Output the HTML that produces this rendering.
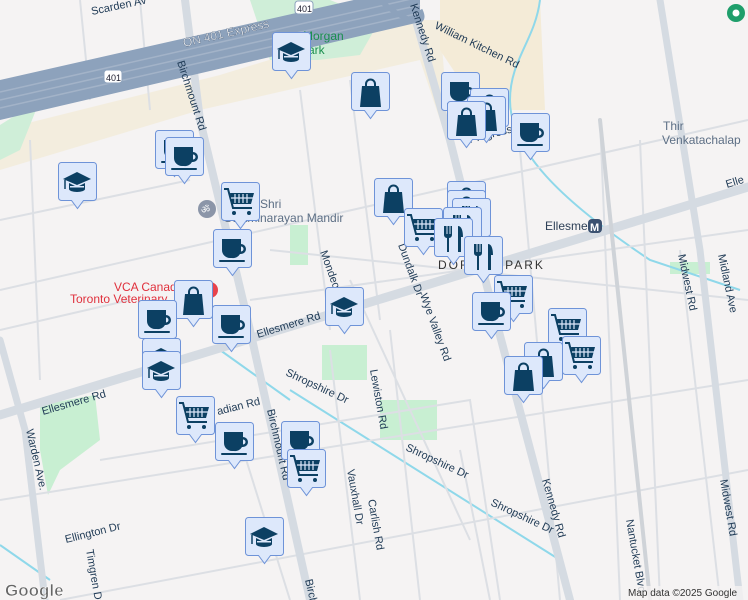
<!DOCTYPE html>
<html><head><meta charset="utf-8"><style>
html,body{margin:0;padding:0;width:748px;height:600px;overflow:hidden;background:#f5f3f3}
svg{display:block}
text{font-family:"Liberation Sans",sans-serif}
</style></head><body>
<svg width="748" height="600" viewBox="0 0 748 600" xmlns="http://www.w3.org/2000/svg">
<defs>
<g id="mk"><path d="M3.5,0.5 h32 a3,3 0 0 1 3,3 v32 a3,3 0 0 1 -3,3 h-10 l-6,8 l-6,-8 h-10 a3,3 0 0 1 -3,-3 v-32 a3,3 0 0 1 3,-3z" fill="#dde8fb" stroke="#6e93d8" stroke-width="1"/></g>
<g id="cup"><use href="#mk"/><path d="M9,10 h19 v5 a5,5 0 0 1 0,10 h-1 a8,8 0 0 1 -8,4 h-2 a8,8 0 0 1 -8,-8z M28,17.5 v5 a2.5,2.5 0 0 0 0,-5z" fill="#0c4063" fill-rule="evenodd"/><rect x="6" y="31" width="26" height="2" rx="1" fill="#0c4063"/></g>
<g id="bag"><use href="#mk"/><path d="M11,14 h17 l2,21 h-21z" fill="#0c4063"/><path d="M15,15 v-3 a4.5,4.5 0 0 1 9,0 v3" fill="none" stroke="#0c4063" stroke-width="2"/></g>
<g id="cart"><use href="#mk"/><path d="M3,7 h4 l5,19 h19" fill="none" stroke="#0c4063" stroke-width="2"/><path d="M9,11 h24 l-3,11 h-19z" fill="#0c4063"/><path d="M14,12 v9 M18,12 v9 M22,12 v9 M26,12 v9 M10,16 h22" stroke="#dde8fb" stroke-width="1.2"/><circle cx="13" cy="31" r="2" fill="#0c4063"/><circle cx="28" cy="31" r="2" fill="#0c4063"/></g>
<g id="cap"><use href="#mk"/><path d="M5,17 l14,-7 l14,7 l-14,6z" fill="#0c4063"/><path d="M11,21 v6 a8,3 0 0 0 16,0 v-6 l-8,4z" fill="#0c4063"/><rect x="12" y="24" width="14" height="1.5" fill="#dde8fb"/><path d="M7,18 v9" stroke="#0c4063" stroke-width="1.5"/></g>
<g id="fork"><use href="#mk"/><path d="M10,8 v9 a3,3 0 0 0 3,3 v14 h2 v-14 a3,3 0 0 0 3,-3 v-9 h-1.5 v8 h-1 v-8 h-2 v8 h-1 v-8z" fill="#0c4063"/><path d="M24,8 c4,0 5,6 5,11 h-2 v15 h-3z" fill="#0c4063"/></g>
</defs>
<!-- land areas -->
<path d="M0,130 L220,75 L400,20 L440,20 L450,150 L420,60 L200,110 L0,170z" fill="#f3ecdc" opacity="0.9"/>
<path d="M440,0 L540,0 L545,110 L480,110 L440,50z" fill="#f4ebd7"/>
<path d="M250,0 L330,0 L380,20 L360,55 L318,60 L270,60z" fill="#cfeed8"/>
<path d="M0,125 L40,100 L20,150 L0,160z" fill="#cfeed8"/>
<path d="M40,405 L95,395 L100,440 L60,470 L48,495 L40,450z" fill="#c8efd2"/>
<path d="M290,225 h18 v40 h-18z M322,345 h45 v35 h-45z M380,400 h57 v40 h-57z M670,262 h40 v12 h-40z" fill="#c8efd2"/>
<!-- water -->
<path d="M540,0 C535,40 510,60 510,100 C510,150 560,200 650,260 L740,290" fill="none" stroke="#8fd8ea" stroke-width="2"/>
<path d="M290,390 L560,560 M0,545 L50,580 M220,350 L290,400" fill="none" stroke="#8fd8ea" stroke-width="2"/>
<!-- minor streets -->
<g stroke="#dcdfe4" stroke-width="2" fill="none">
<path d="M0,290 L748,120 M0,220 L190,180 M250,300 L748,230 M0,500 L748,380 M60,600 L748,470 M270,250 L748,300 M80,0 L90,100 M140,0 L150,110 M30,140 L40,380 M300,90 L330,330 M350,80 L380,320 M600,120 L620,600 M640,140 L660,600 M680,250 L720,600 M520,150 L560,600 M390,330 L420,600 M330,350 L360,600 M460,450 L490,600 M0,330 L130,300 M100,460 L470,400 L500,600 M240,440 L290,600 M350,280 L470,540"/>
</g>
<!-- main roads -->
<g stroke="#d5dbe2" fill="none" stroke-linecap="round">
<path d="M0,415 L748,187" stroke-width="9"/>
<path d="M185,0 L200,120 L250,330 L310,600" stroke-width="8"/>
<path d="M410,0 L450,140 L480,260 L570,600" stroke-width="8"/>
<path d="M660,0 L700,250 L740,600" stroke-width="7"/>
<path d="M0,340 L25,430 L45,600" stroke-width="7"/>
<path d="M600,120 L650,600" stroke-width="4" stroke="#cfd3d8"/>
</g>
<!-- highway -->
<path d="M0,80 L420,-15 L420,22 L0,120z" fill="#8da2bc"/>
<path d="M0,92 L420,-3 M0,100 L420,5 M0,108 L420,13" stroke="#a3b3c8" stroke-width="1.5" fill="none"/>
<path d="M380,0 C400,20 430,30 420,10" stroke="#8da2bc" stroke-width="5" fill="none"/>
<rect x="295" y="1" width="18" height="13" rx="3" fill="#fff" stroke="#8da2bc"/>
<text x="297" y="12" font-size="9" fill="#223">401</text>
<rect x="104" y="70" width="18" height="13" rx="3" fill="#fff" stroke="#8da2bc"/>
<text x="106" y="81" font-size="9" fill="#223">401</text>
<text transform="translate(184,47) rotate(-13)" font-size="12" fill="#fff" stroke="#3f536f" stroke-width="0.3">ON 401 Express</text>
<!-- labels -->
<g font-size="11" fill="#1f3a55">
<text transform="translate(92,15) rotate(-12)">Scarden Av</text>
<text transform="translate(177,62) rotate(72)">Birchmount Rd</text>
<text transform="translate(410,5) rotate(72)">Kennedy Rd</text>
<text transform="translate(434,28) rotate(26)">William Kitchen Rd</text>
<text transform="translate(43,415) rotate(-16)">Ellesmere Rd</text>
<text transform="translate(258,338) rotate(-17)">Ellesmere Rd</text>
<text transform="translate(727,188) rotate(-17)">Elle</text>
<text transform="translate(26,430) rotate(77)">Warden Ave.</text>
<text transform="translate(267,410) rotate(77)">Birchmount Rd</text>
<text transform="translate(305,580) rotate(77)">Birchmo</text>
<text transform="translate(320,252) rotate(70)">Mondeo</text>
<text transform="translate(398,245) rotate(70)">Dundalk Dr</text>
<text transform="translate(420,295) rotate(70)">Wye Valley Rd</text>
<text transform="translate(370,370) rotate(80)">Lewiston Rd</text>
<text transform="translate(285,375) rotate(25)">Shropshire Dr</text>
<text transform="translate(405,450) rotate(25)">Shropshire Dr</text>
<text transform="translate(490,505) rotate(25)">Shropshire Dr</text>
<text transform="translate(542,480) rotate(74)">Kennedy Rd</text>
<text transform="translate(347,470) rotate(80)">Vauxhall Dr</text>
<text transform="translate(368,500) rotate(80)">Carlish Rd</text>
<text transform="translate(66,543) rotate(-14)">Ellington Dr</text>
<text transform="translate(86,550) rotate(80)">Timgren Dr</text>
<text transform="translate(678,255) rotate(78)">Midwest Rd</text>
<text transform="translate(718,255) rotate(78)">Midland Ave</text>
<text transform="translate(720,480) rotate(80)">Midwest Rd</text>
<text transform="translate(626,520) rotate(80)">Nantucket Blvd</text>
<text transform="translate(218,415) rotate(-14)">adian Rd</text>
<text transform="translate(470,143) rotate(-14)">Progress</text>
</g>
<text x="545" y="230" font-size="12" fill="#2e4057">Ellesmere</text>
<rect x="588" y="219" width="14" height="14" rx="4" fill="#3b5170"/><text x="590" y="231" font-size="11" fill="#fff" font-weight="bold">M</text>
<text x="438" y="269" font-size="12" fill="#333" letter-spacing="2">DORSET PARK</text>
<text x="663" y="130" font-size="12" fill="#5d6f85">Thir</text>
<text x="662" y="144" font-size="12" fill="#5d6f85">Venkatachalap</text>
<text x="260" y="208" font-size="12" fill="#5d6f85">Shri</text>
<text x="224" y="222" font-size="12" fill="#5d6f85">Swaminarayan Mandir</text>
<circle cx="207" cy="209" r="9" fill="#8b95a8"/><text x="201" y="213" font-size="10" fill="#fff">ॐ</text>
<text x="303" y="40" font-size="12" fill="#1a8f4e">Morgan</text>
<text x="300" y="54" font-size="12" fill="#1a8f4e">Park</text>
<circle cx="210" cy="290" r="8" fill="#e8424b"/>
<text x="114" y="291" font-size="12" fill="#e0303c">VCA Canada</text>
<text x="70" y="303" font-size="12" fill="#e0303c">Toronto Veterinary</text>
<circle cx="736" cy="13" r="9" fill="#1f9e6b"/><circle cx="736" cy="13" r="3.5" fill="#fff"/>
<text x="5" y="596" font-size="17" font-weight="bold" fill="#666" stroke="#fff" stroke-width="0.6">Google</text>
<rect x="624" y="586" width="124" height="14" fill="#f5f3f3" opacity="0.8"/>
<text x="628" y="596" font-size="10" fill="#333">Map data ©2025 Google</text>
<!-- markers -->
<use href="#cap" x="272" y="32"/>
<use href="#bag" x="351" y="72"/>
<use href="#cup" x="155" y="130"/>
<use href="#cup" x="165" y="137"/>
<use href="#cap" x="58" y="162"/>
<use href="#cart" x="221" y="182"/>
<use href="#cup" x="213" y="229"/>
<use href="#bag" x="174" y="280"/>
<use href="#cup" x="138" y="300"/>
<use href="#cup" x="212" y="305"/>
<use href="#cap" x="325" y="287"/>
<use href="#cap" x="142" y="338"/>
<use href="#cap" x="142" y="351"/>
<use href="#cart" x="176" y="396"/>
<use href="#cup" x="215" y="422"/>
<use href="#cup" x="281" y="421"/>
<use href="#cart" x="287" y="449"/>
<use href="#cap" x="245" y="517"/>
<use href="#cup" x="441" y="72"/>
<use href="#bag" x="470" y="88"/>
<use href="#bag" x="467" y="96"/>
<use href="#bag" x="447" y="101"/>
<use href="#cup" x="511" y="113"/>
<use href="#bag" x="374" y="178"/>
<use href="#bag" x="447" y="181"/>
<use href="#bag" x="447" y="190"/>
<use href="#fork" x="452" y="198"/>
<use href="#fork" x="443" y="207"/>
<use href="#cart" x="404" y="208"/>
<use href="#fork" x="434" y="218"/>
<use href="#fork" x="464" y="236"/>
<use href="#cart" x="494" y="275"/>
<use href="#cup" x="472" y="292"/>
<use href="#cart" x="548" y="308"/>
<use href="#bag" x="524" y="342"/>
<use href="#cart" x="562" y="336"/>
<use href="#bag" x="504" y="356"/>
</svg>
</body></html>
